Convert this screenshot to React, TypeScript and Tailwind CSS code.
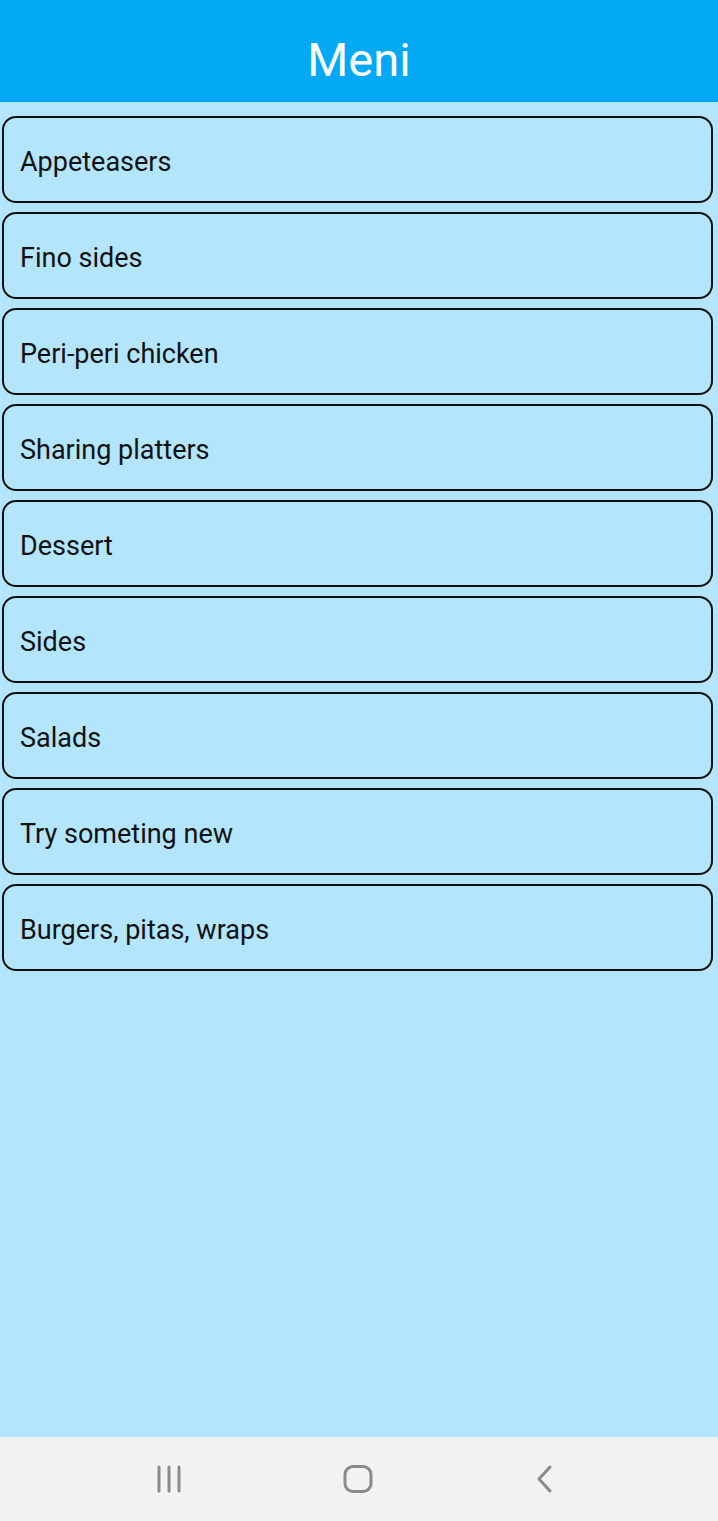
const items = [
  "Appeteasers",
  "Fino sides",
  "Peri-peri chicken",
  "Sharing platters",
  "Dessert",
  "Sides",
  "Salads",
  "Try someting new",
  "Burgers, pitas, wraps",
];

export default function App() {
  return (
    <div className="flex h-[1521px] w-[718px] flex-col bg-[#b3e5fc] font-['Roboto',sans-serif]">
      <header className="flex h-[102px] items-center justify-center bg-[#03a9f4] pt-[16px]">
        <h1 className="text-[47px] leading-none text-white">Meni</h1>
      </header>
      <main className="flex flex-1 flex-col gap-[9px] pl-[2px] pr-[5px] pt-[14px]">
        {items.map((item) => (
          <div
            key={item}
            className="flex h-[87px] items-center rounded-[14px] border-2 border-[#111] px-[16px] pt-[5px] text-[27px] text-[#111]"
          >
            {item}
          </div>
        ))}
      </main>
      <nav className="flex h-[84px] items-center justify-between bg-[#f2f2f2] pl-[155px] pr-[158px]">
        <svg width="30" height="30" viewBox="0 0 30 30" className="text-[#8a8a8a]">
          <g stroke="currentColor" strokeWidth="3" strokeLinecap="round">
            <line x1="4" y1="3" x2="4" y2="27" />
            <line x1="14" y1="3" x2="14" y2="27" />
            <line x1="24" y1="3" x2="24" y2="27" />
          </g>
        </svg>
        <svg width="30" height="30" viewBox="0 0 30 30" className="text-[#8a8a8a]">
          <rect x="2" y="2.5" width="26" height="25" rx="8" fill="none" stroke="currentColor" strokeWidth="3" />
        </svg>
        <svg width="30" height="30" viewBox="0 0 30 30" className="text-[#8a8a8a]">
          <polyline points="20,3 9,15 20,27" fill="none" stroke="currentColor" strokeWidth="3" strokeLinecap="round" strokeLinejoin="round" />
        </svg>
      </nav>
    </div>
  );
}
